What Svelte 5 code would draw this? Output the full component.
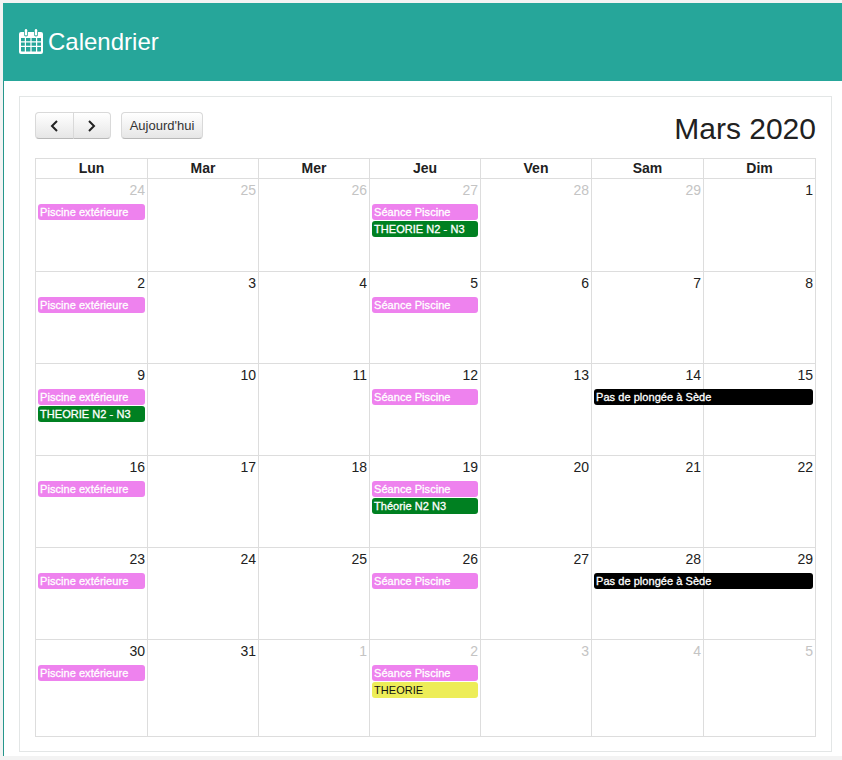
<script>
  const heads = ['Lun', 'Mar', 'Mer', 'Jeu', 'Ven', 'Sam', 'Dim'];
  const P = { t: 'Piscine extérieure', c: 'pink' };
  const S = { t: 'Séance Piscine', c: 'pink' };
  const T = { t: 'THEORIE N2 - N3', c: 'green' };
  const rows = [
    { h: 93, days: [[24, 1, [P]], [25, 1], [26, 1], [27, 1, [S, T]], [28, 1], [29, 1], [1, 0]] },
    { h: 92, days: [[2, 0, [P]], [3], [4], [5, 0, [S]], [6], [7], [8]] },
    { h: 92, days: [[9, 0, [P, T]], [10], [11], [12, 0, [S]], [13], [14], [15]], span: true },
    { h: 92, days: [[16, 0, [P]], [17], [18], [19, 0, [S, { t: 'Théorie N2 N3', c: 'green' }]], [20], [21], [22]] },
    { h: 92, days: [[23, 0, [P]], [24], [25], [26, 0, [S]], [27], [28], [29]], span: true },
    { h: 97, days: [[30, 0, [P]], [31], [1, 1], [2, 1, [S, { t: 'THEORIE', c: 'yellow' }]], [3, 1], [4, 1], [5, 1]] }
  ];
</script>

<div class="page">
  <header class="top">
    <svg class="cal" width="24" height="26" viewBox="0 0 24 26" fill="#fff">
      <path fill-rule="evenodd" d="M2 4h3v2.500a2 2 0 0 0 4 0V4h6v2.500a2 2 0 0 0 4 0V4h3a2 2 0 0 1 2 2v18a2 2 0 0 1-2 2H2a2 2 0 0 1-2-2V6a2 2 0 0 1 2-2ZM2 10v3.200h3.800V10ZM7 10v3.200h4.400V10ZM12.600 10v3.200H17V10ZM18.200 10v3.200H22V10ZM2 14.400v3.400h3.800v-3.400ZM7 14.400v3.400h4.400v-3.400ZM12.600 14.400v3.400H17v-3.400ZM18.200 14.400v3.400H22v-3.400ZM2 19v3.800a.7.7 0 0 0 .7.7h3.100V19ZM7 19v4.500h4.400V19ZM12.600 19v4.500H17V19ZM18.200 19v4.500h3.100a.7.7 0 0 0 .7-.7V19Z"/>
      <rect x="5.800" y="1" width="2.400" height="6.500" rx="1.200"/>
      <rect x="15.800" y="1" width="2.400" height="6.500" rx="1.200"/>
    </svg>
    <h1>Calendrier</h1>
  </header>
  <main class="body">
    <section class="card">
      <div class="toolbar">
        <div class="left">
          <div class="group">
            <button class="btn arrow" aria-label="Précédent">
              <svg width="9" height="12" viewBox="0 0 9 12"><path d="M7 1 2 6l5 5" fill="none" stroke="#222" stroke-width="2"/></svg>
            </button>
            <button class="btn arrow second" aria-label="Suivant">
              <svg width="9" height="12" viewBox="0 0 9 12"><path d="m2 1 5 5-5 5" fill="none" stroke="#222" stroke-width="2"/></svg>
            </button>
          </div>
          <button class="btn today">Aujourd'hui</button>
        </div>
        <h2>Mars 2020</h2>
      </div>
      <div class="cal-table">
        <div class="head">
          {#each heads as h}<div class="hcell">{h}</div>{/each}
        </div>
        {#each rows as r}
          <div class="row" style="height:{r.h}px">
            {#each r.days as d}
              <div class="day">
                <div class="num" class:other={d[1]}>{d[0]}</div>
                {#each d[2] ?? [] as e}
                  <div class="ev {e.c}">{e.t}</div>
                {/each}
              </div>
            {/each}
            {#if r.span}
              <div class="ev black span">Pas de plongée à Sède</div>
            {/if}
          </div>
        {/each}
      </div>
    </section>
  </main>
</div>

<style>
  :global(body) {
    margin: 0;
    background: #f3f3f3;
    font-family: "Liberation Sans", Arial, sans-serif;
    color: #212121;
  }
  .page {
    height: 760px;
    box-sizing: border-box;
    padding: 3px 0 0 3px;
    overflow: hidden;
  }
  .top {
    height: 78px;
    background: #26a69a;
    display: flex;
    align-items: center;
    gap: 5px;
    padding-left: 16px;
    color: #fff;
  }
  .cal { margin-top: -3px; }
  h1 {
    margin: 0;
    font-size: 24px;
    font-weight: 400;
    line-height: 1;
  }
  .body {
    height: 675px;
    box-sizing: border-box;
    border-left: 1px solid #26968c;
    padding: 15px 10px 0 15px;
    background: #fff;
  }
  .card {
    height: 656px;
    box-sizing: border-box;
    border: 1px solid #e3e6e6;
    padding: 15px;
    background: #fff;
  }
  .toolbar {
    display: flex;
    justify-content: space-between;
    align-items: flex-start;
    height: 46px;
  }
  .left { display: flex; gap: 10px; }
  .group { display: flex; }
  .btn {
    height: 27px;
    box-sizing: border-box;
    border: 1px solid #d9d9d9;
    border-bottom-color: #b8b8b8;
    background: linear-gradient(#ffffff, #e6e6e6);
    border-radius: 4px;
    color: #333;
    font: 13px "Liberation Sans", Arial, sans-serif;
    padding: 0;
    display: flex;
    align-items: center;
    justify-content: center;
  }
  .arrow { width: 38.500px; border-radius: 4px 0 0 4px; }
  .second { margin-left: -1px; border-radius: 0 4px 4px 0; }
  .today { width: 82px; }
  h2 {
    margin: 0;
    font-size: 30px;
    font-weight: 400;
    line-height: 34px;
    color: #212121;
  }
  .cal-table {
    width: 781px;
    box-sizing: border-box;
    border-left: 1px solid #ddd;
    border-top: 1px solid #ddd;
  }
  .head, .row {
    display: grid;
    grid-template-columns: 112px 111px 111px 111px 111px 112px 112px;
    width: 780px;
  }
  .head { height: 20px; }
  .row { position: relative; box-sizing: border-box; }
  .hcell {
    border-right: 1px solid #ddd;
    border-bottom: 1px solid #ddd;
    text-align: center;
    font-size: 14px;
    font-weight: 700;
    line-height: 19px;
    color: #212121;
  }
  .day {
    border-right: 1px solid #ddd;
    border-bottom: 1px solid #ddd;
    padding: 0 2px;
    min-width: 0;
  }
  .num {
    text-align: right;
    font-size: 14px;
    line-height: 16px;
    padding: 3px 0 0;
    height: 21px;
    margin-bottom: 4px;
    box-sizing: border-box;
    color: #212121;
  }
  .other { color: #c4c4c4; }
  .ev {
    height: 16px;
    margin-bottom: 1px;
    box-sizing: border-box;
    border-radius: 3px;
    font-size: 11px;
    line-height: 16px;
    padding-left: 2px;
    white-space: nowrap;
    overflow: hidden;
    letter-spacing: 0.05px;
  }
  .pink { background: #ee82ee; color: #fff; -webkit-text-stroke: 0.3px #fff; }
  .green { background: #008021; color: #fff; -webkit-text-stroke: 0.3px #fff; }
  .yellow { background: #eded58; color: #111; }
  .black { background: #000; color: #fff; -webkit-text-stroke: 0.3px #fff; }
  .span {
    position: absolute;
    left: 558px;
    right: 3px;
    top: 25px;
  }
</style>
